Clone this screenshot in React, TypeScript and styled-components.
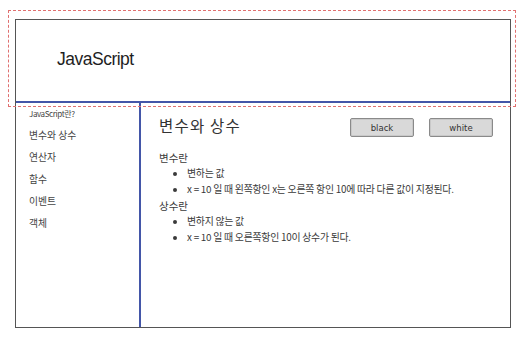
import React from "react";
import styled, { createGlobalStyle } from "styled-components";

const Global = createGlobalStyle`
  html, body { margin: 0; padding: 0; background: #fff; }
  body { font-family: "Noto Sans CJK KR", "Liberation Sans", sans-serif; color: #333; }
`;

const Page = styled.div`
  position: relative;
  width: 523px;
  height: 343px;
  padding: 19px 0 0 15px;
  box-sizing: border-box;
`;

const Frame = styled.div`
  width: 496px;
  height: 309px;
  border: 1px solid #555;
  box-sizing: border-box;
  display: flex;
  flex-direction: column;
`;

const Header = styled.header`
  height: 83px;
  flex: none;
  border-bottom: 2px solid #4356a8;
  box-sizing: border-box;
  display: flex;
  align-items: center;
  padding: 0 0 0 41px;
`;

const Logo = styled.h1`
  margin: 0 0 2px;
  font-family: "Liberation Sans", Arial, sans-serif;
  font-weight: 400;
  font-size: 17.5px;
  letter-spacing: -0.5px;
  color: #1e1e1e;
`;

const Body = styled.div`
  flex: 1;
  display: flex;
`;

const Sidebar = styled.nav`
  width: 125px;
  flex: none;
  border-right: 2px solid #4356a8;
  box-sizing: border-box;
  padding: 5px 0 0 13px;
  display: flex;
  flex-direction: column;
`;

const NavItem = styled.div<{ $small?: boolean }>`
  font-size: ${(p) => (p.$small ? "8px" : "9.8px")};
  height: ${(p) => (p.$small ? "16px" : "22px")};
  line-height: ${(p) => (p.$small ? "12px" : "22px")};
  color: #444;
  letter-spacing: ${(p) => (p.$small ? "-0.4px" : "0")};
`;

const Content = styled.main`
  flex: 1;
  padding: 12px 0 0 18px;
  display: flex;
  flex-direction: column;
`;

const TitleRow = styled.div`
  display: flex;
  align-items: flex-start;
  justify-content: space-between;
  padding-right: 17px;
  margin-bottom: 14px;
`;

const Title = styled.h2`
  margin: 0;
  font-weight: 400;
  font-size: 15.5px;
  letter-spacing: 1.2px;
  color: #333;
  line-height: 20px;
`;

const Buttons = styled.div`
  display: flex;
  gap: 15px;
  margin-top: 3px;
`;

const Btn = styled.button`
  width: 64px;
  height: 19px;
  background: #d9d9d9;
  border: 1px solid #8a8a8a;
  border-radius: 2px;
  box-shadow: inset 0 0 0 1px #c9c9c9;
  font-family: "DejaVu Sans", "Liberation Sans", sans-serif;
  font-size: 8.5px;
  color: #333;
  padding: 0;
`;

const Section = styled.h3`
  margin: 0;
  font-weight: 400;
  font-size: 10.5px;
  color: #3a3a3a;
  line-height: 14px;
`;

const List = styled.ul`
  margin: 1px 0 2px;
  padding: 0 0 0 28px;
  list-style: disc;
`;

const Item = styled.li`
  font-size: 9.9px;
  line-height: 15.5px;
  color: #3a3a3a;
  letter-spacing: -0.25px;
`;

const DashedOverlay = styled.div`
  position: absolute;
  left: 8px;
  top: 10px;
  width: 508px;
  height: 97px;
  border: 1px dashed #e07070;
  box-sizing: border-box;
  pointer-events: none;
`;

export default function App() {
  return (
    <Page>
      <Global />
      <Frame>
        <Header>
          <Logo>JavaScript</Logo>
        </Header>
        <Body>
          <Sidebar>
            <NavItem $small>JavaScript란?</NavItem>
            <NavItem>변수와 상수</NavItem>
            <NavItem>연산자</NavItem>
            <NavItem>함수</NavItem>
            <NavItem>이벤트</NavItem>
            <NavItem>객체</NavItem>
          </Sidebar>
          <Content>
            <TitleRow>
              <Title>변수와 상수</Title>
              <Buttons>
                <Btn>black</Btn>
                <Btn>white</Btn>
              </Buttons>
            </TitleRow>
            <Section>변수란</Section>
            <List>
              <Item>변하는 값</Item>
              <Item>x = 10 일 때 왼쪽항인 x는 오른쪽 항인 10에 따라 다른 값이 지정된다.</Item>
            </List>
            <Section>상수란</Section>
            <List>
              <Item>변하지 않는 값</Item>
              <Item>x = 10 일 때 오른쪽항인 10이 상수가 된다.</Item>
            </List>
          </Content>
        </Body>
      </Frame>
      <DashedOverlay />
    </Page>
  );
}
